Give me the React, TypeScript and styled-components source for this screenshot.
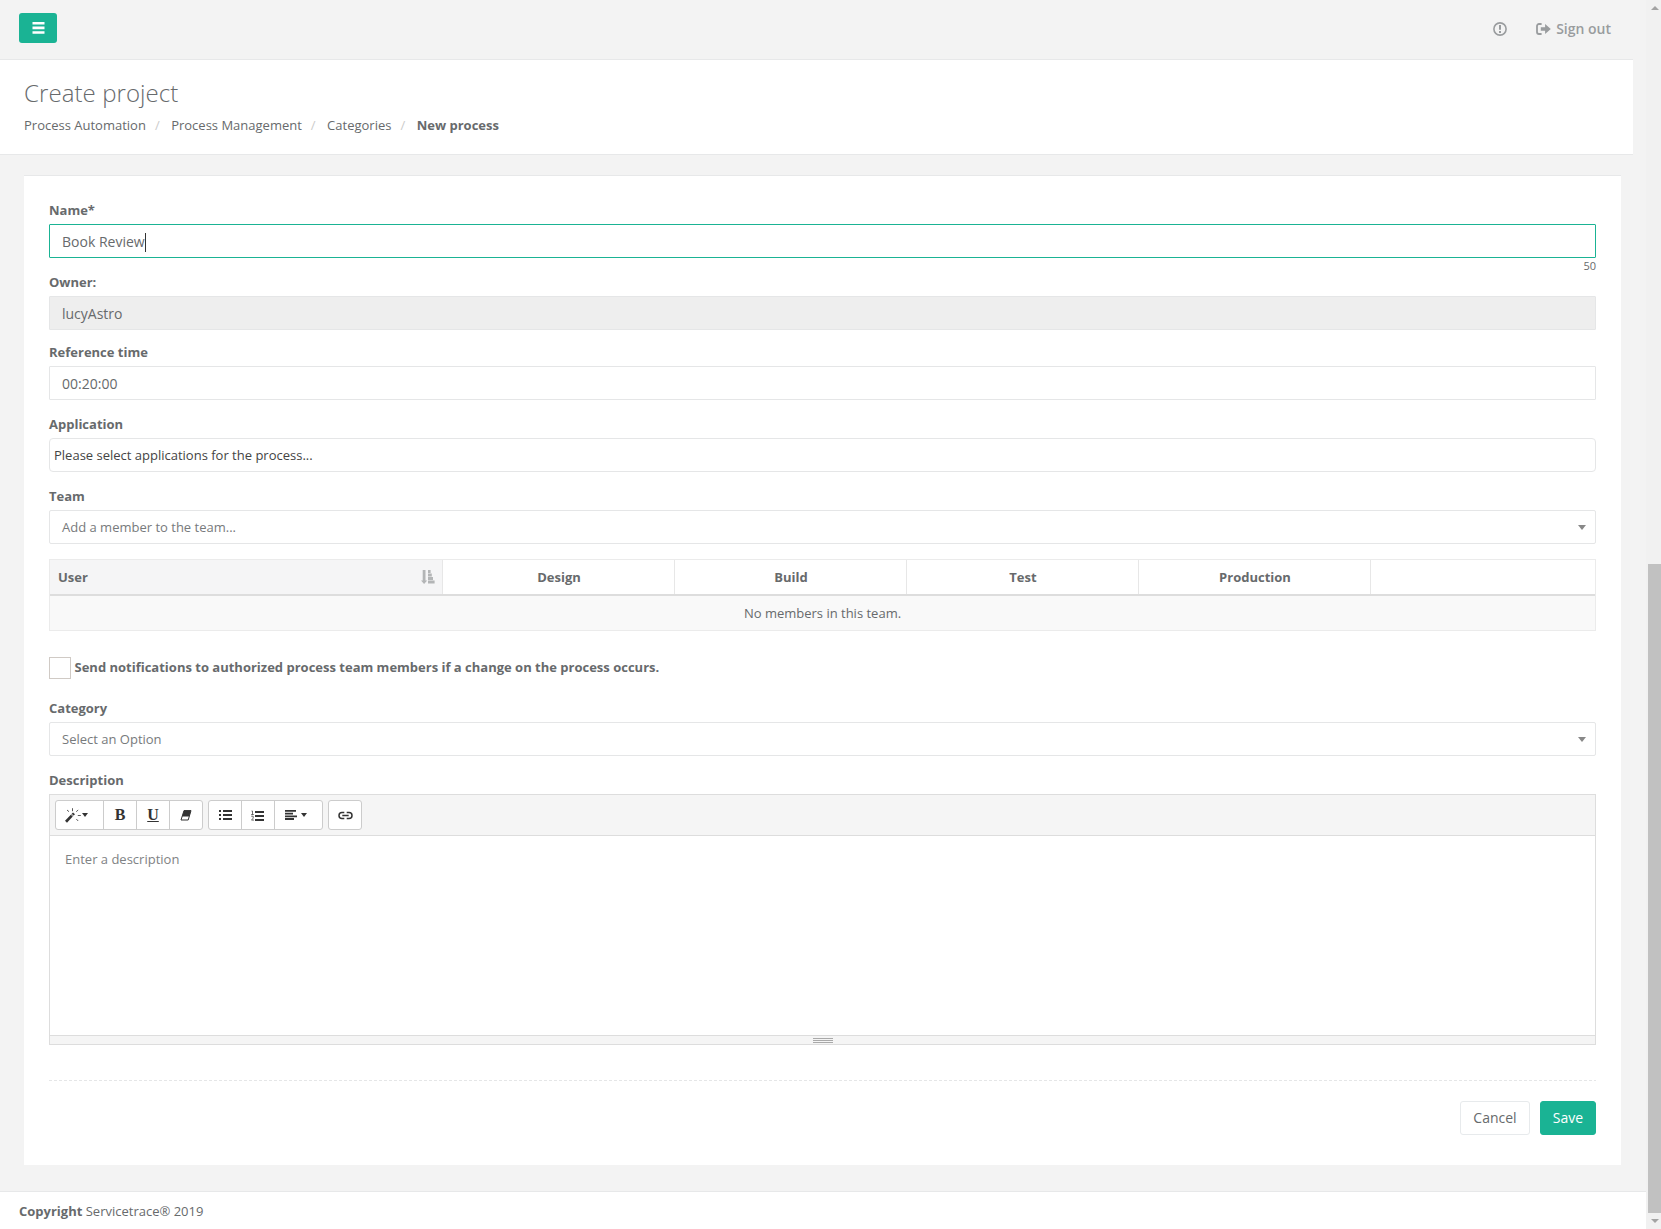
import React from "react";
import styled, { createGlobalStyle, css } from "styled-components";

const Global = createGlobalStyle`
  *, *::before, *::after { box-sizing: border-box; }
  html, body, #root { margin: 0; height: 100%; overflow: hidden; }
  body {
    background: #f3f3f3;
    color: #676a6c;
    font: 13px/18px "Open Sans", sans-serif;
  }
  svg { display: block; }
`;

const Window = styled.div`
  display: flex;
  height: 1229px;
  width: 1661px;
`;
const Page = styled.div`
  flex: 1;
  display: flex;
  flex-direction: column;
`;
const TopBar = styled.nav`
  height: 60px;
  width: 1633px;
  border-bottom: 1px solid #e7e8e9;
  display: flex;
  align-items: flex-start;
  justify-content: space-between;
  padding: 13px 22px 0 19px;
`;
const MenuButton = styled.button`
  width: 38px;
  height: 30px;
  border: 0;
  border-radius: 3px;
  background: #1ab394;
  color: #fff;
  padding: 0;
  display: flex;
  align-items: center;
  justify-content: center;
`;
const TopLinks = styled.div`
  display: flex;
  align-items: center;
  gap: 29px;
  height: 32px;
  color: #999c9e;
  font-size: 14px;
  font-weight: 600;
`;
const SignOut = styled.a`
  display: flex;
  align-items: center;
  gap: 5px;
`;
const Heading = styled.header`
  height: 95px;
  width: 1633px;
  background: #fff;
  border-bottom: 1px solid #e7e8e9;
  padding: 20px 24px 0;
`;
const Title = styled.h2`
  margin: 0 0 10px;
  font-size: 24px;
  line-height: 26px;
  font-weight: 300;
  letter-spacing: 0.08px;
`;
const Crumbs = styled.ol`
  display: flex;
  list-style: none;
  margin: 0;
  padding: 0;
`;
const Crumb = styled.li<{ $active?: boolean }>`
  font-weight: ${(p) => (p.$active ? 700 : 400)};
  &:not(:first-child)::before {
    content: "/";
    color: #ccc;
    font-weight: 400;
    padding: 0 11.5px 0 9px;
  }
`;
const Card = styled.main`
  margin: 20px 25px 0 24px;
  height: 990px;
  border-top: 1px solid #e7e8e9;
  background: #fff;
  padding: 25px 25px 0;
`;
const Field = styled.div<{ $gap: number }>`
  margin-bottom: ${(p) => p.$gap}px;
`;
const Label = styled.label`
  display: block;
  font-weight: 700;
  margin-bottom: 5px;
`;
const box = css`
  display: flex;
  align-items: center;
  height: 34px;
  border: 1px solid #e5e6e7;
  padding: 0 12px;
`;
const Input = styled.div<{ $focus?: boolean; $disabled?: boolean }>`
  ${box}
  padding-top: 2px;
  font-size: 14px;
  border-radius: 1px;
  ${(p) => p.$focus && "border-color: #1ab394;"}
  ${(p) => p.$disabled && "background: #eee;"}
`;
const Caret = styled.i`
  width: 1px;
  height: 19px;
  background: #333;
`;
const MultiSelect = styled.div`
  ${box}
  padding: 0 4px;
  border-radius: 4px;
  color: #444;
`;
const Select = styled.div`
  ${box}
  justify-content: space-between;
  border-radius: 2px;
  padding-right: 9px;
  color: #777a7c;
`;
const Arrow = styled.i<{ $c?: string; $up?: boolean; $w?: number; $h?: number }>`
  border: ${(p) => p.$w ?? 3.5}px solid transparent;
  border-bottom-width: ${(p) => (p.$up ? p.$h ?? 6 : 0)}px;
  border-top-width: ${(p) => (p.$up ? 0 : p.$h ?? 6)}px;
  ${(p) => (p.$up ? "border-bottom-color" : "border-top-color")}: ${(p) => p.$c ?? "#888"};
`;
const SelectArrow = styled(Arrow)`
  border-width: 5px 4px 0;
  margin-top: 1px;
`;
const Counter = styled.div`
  text-align: right;
  font-size: 11px;
  line-height: 15px;
`;
const Table = styled.div`
  border: 1px solid #ebebeb;
  height: 72px;
  margin-bottom: 26px;
`;
const HeadRow = styled.div`
  display: grid;
  grid-template-columns: 393px repeat(4, 232px) 1fr;
  height: 36px;
  border-bottom: 2px solid #ddd;
`;
const HeadCell = styled.div<{ $sorted?: boolean }>`
  display: flex;
  align-items: center;
  justify-content: ${(p) => (p.$sorted ? "space-between" : "center")};
  background: ${(p) => (p.$sorted ? "#f5f5f6" : "#fff")};
  padding: 0 7px 0 8px;
  font-weight: 700;
  &:not(:last-child) { border-right: 1px solid #e7e7e7; }
`;
const EmptyRow = styled.div`
  height: 34px;
  background: #f9f9f9;
  display: flex;
  align-items: center;
  justify-content: center;
`;
const CheckLine = styled.div`
  display: flex;
  gap: 3.5px;
  height: 22px;
  line-height: 20px;
  font-weight: 700;
  margin-bottom: 20px;
`;
const CheckBox = styled.i`
  width: 22px;
  height: 22px;
  border: 1px solid #d0cac5;
`;
const Editor = styled.div`
  height: 251px;
  border: 1px solid #ddd;
  display: flex;
  flex-direction: column;
`;
const Toolbar = styled.div`
  height: 41px;
  flex: none;
  background: #f5f5f5;
  border-bottom: 1px solid #ddd;
  display: flex;
  gap: 5px;
  padding: 5px;
`;
const Group = styled.div`
  display: flex;
  height: 30px;
  border: 1px solid #ccc;
  border-radius: 3px;
  background: #fff;
`;
const Tool = styled.button<{ $menu?: boolean; $gap?: number; $u?: boolean }>`
  width: ${(p) => (p.$menu ? 48 : 33)}px;
  border: 0;
  padding: 0 ${(p) => (p.$menu ? 6 : 0)}px 0 0;
  background: none;
  color: #333;
  display: flex;
  align-items: center;
  justify-content: center;
  gap: ${(p) => p.$gap ?? 0}px;
  font: 700 16px/16px "Liberation Serif", serif;
  ${(p) => p.$u && "text-decoration: underline;"}
  &:not(:last-child) { border-right: 1px solid #ccc; }
  &:last-child { width: ${(p) => (p.$menu ? 47 : 32)}px; }
`;
const EditArea = styled.div`
  flex: 1;
  padding: 14px 15px;
  color: #808284;
`;
const StatusBar = styled.div`
  height: 9px;
  border-top: 1px solid #ddd;
  background: #f5f5f5;
  display: flex;
  justify-content: center;
  padding-top: 2px;
`;
const Grip = styled.i`
  width: 20px;
  height: 5px;
  border: solid #a9a9a9;
  border-width: 1px 0;
  background: linear-gradient(#f5f5f5 0 1px, #a9a9a9 1px 2px, #f5f5f5 2px);
`;
const Divider = styled.div`
  height: 1px;
  margin: 35px 0 20px;
  background: repeating-linear-gradient(90deg, #e5e6e7 0 3px, transparent 3px 5px);
`;
const Actions = styled.div`
  display: flex;
  justify-content: flex-end;
  gap: 10px;
`;
const Button = styled.button<{ $primary?: boolean }>`
  height: 34px;
  width: ${(p) => (p.$primary ? 56 : 70)}px;
  padding: 0;
  border-radius: 3px;
  font: 14px/20px "Open Sans", sans-serif;
  border: 1px solid ${(p) => (p.$primary ? "#1ab394" : "#e7eaec")};
  background: ${(p) => (p.$primary ? "#1ab394" : "#fff")};
  color: ${(p) => (p.$primary ? "#fff" : "#676a6c")};
`;
const Footer = styled.footer`
  margin-top: 26px;
  height: 38px;
  border-top: 1px solid #e7e8e9;
  background: #fff;
  padding: 10px 19px;
`;
const Scrollbar = styled.aside`
  width: 15px;
  background: #f1f1f1;
  display: flex;
  flex-direction: column;
  align-items: center;
  padding: 6px 0 6px 2px;
`;
const Thumb = styled.i`
  width: 13px;
  height: 649px;
  margin: 554px 0 6px;
  background: #c1c1c1;
`;

const Bars = () => (
  <svg width="13" height="12" fill="currentColor">
    <path d="M.5 0h12v2.6H.5zM.5 4.6h12v2.6H.5zM.5 9.2h12v2.6H.5z" />
  </svg>
);
const Alert = () => (
  <svg width="14" height="14" viewBox="0 0 14 14" fill="none" stroke="currentColor">
    <circle cx="7" cy="7" r="6.1" strokeWidth="1.6" />
    <path d="M7 3v4.8M7 9v2" strokeWidth="2" />
  </svg>
);
const Exit = () => (
  <svg width="15" height="12" viewBox="0 0 15 12">
    <path d="M5.6 1H3a2 2 0 0 0-2 2v6a2 2 0 0 0 2 2h2.6" fill="none" stroke="currentColor" strokeWidth="1.8" />
    <path d="M4.8 4.3h4.3V1L14.8 6 9.1 11V7.7H4.8z" fill="currentColor" />
  </svg>
);
const Sort = () => (
  <svg width="14" height="14" viewBox="0 0 14 14" fill="#b3b5b6">
    <path d="M1.7 0h2.8v10.4h1.7L3.1 14 0 10.4h1.7zM7 0h2.6v2.9H7zM7 3.5h3.8v2.9H7zM7 7h5v2.9H7zM7 10.5h6.6v2.9H7z" />
  </svg>
);
const Magic = () => (
  <svg width="16" height="15" viewBox="0 0 16 15" stroke="currentColor" fill="none">
    <path d="M1 13.7 6.8 7.6" strokeWidth="2.7" />
    <path d="M7.2 7.2 9 5.4" strokeWidth="2.7" />
    <path d="m7 6.2 2 2" stroke="#fff" strokeWidth=".7" />
    <path d="M7.5.2v3M2 2l2 1.7M13.2 2l-2 1.7M12.8 7.5h3M11.3 11l1.9 2" strokeWidth=".8" />
  </svg>
);
const Eraser = () => (
  <svg width="12" height="11" viewBox="0 0 12 11">
    <path d="M4 .6h7L8.2 10H1z" fill="none" stroke="currentColor" />
    <path d="M4 .6h7L9.3 6.5H2.1z" fill="currentColor" />
  </svg>
);
const Bullets = () => (
  <svg width="13" height="10" fill="currentColor">
    <path d="M0 0h2v2H0zM0 4h2v2H0zM0 8h2v2H0zM4 0h9v2H4zM4 4h9v2H4zM4 8h9v2H4z" />
  </svg>
);
const Numbers = () => (
  <svg width="14" height="11" viewBox="0 0 14 11">
    <path d="M4 1h9v2H4zM4 5h9v2H4zM4 9h9v2H4z" fill="currentColor" />
    <path d="M.5 1h1v3.5M.2 4.5h2.6M.2 6.2h2v1.9l-1.7 2H3" fill="none" stroke="currentColor" strokeWidth=".7" />
  </svg>
);
const Align = () => (
  <svg width="12" height="10" fill="currentColor">
    <path d="M0 0h11v1.8H0zM0 2.7h8v1.8H0zM0 5.4h12v1.8H0zM0 8.1h9v1.8H0z" />
  </svg>
);
const Chain = () => (
  <svg width="15" height="9" viewBox="0 0 15 9" fill="none" stroke="currentColor" strokeWidth="1.5">
    <path d="M6.3 7.5H4a3 3 0 0 1 0-6h2.3M8.7 1.5H11a3 3 0 0 1 0 6H8.7M4.3 4.5h6.4" />
  </svg>
);

const stages = ["Design", "Build", "Test", "Production"];

export default function App() {
  return (
    <Window>
      <Global />
      <Page>
        <TopBar>
          <MenuButton><Bars /></MenuButton>
          <TopLinks><Alert /><SignOut><Exit />Sign out</SignOut></TopLinks>
        </TopBar>
        <Heading>
          <Title>Create project</Title>
          <Crumbs>
            <Crumb>Process Automation</Crumb>
            <Crumb>Process Management</Crumb>
            <Crumb>Categories</Crumb>
            <Crumb $active>New process</Crumb>
          </Crumbs>
        </Heading>
        <Card>
          <Field $gap={0}>
            <Label>Name*</Label>
            <Input $focus>Book Review<Caret /></Input>
            <Counter>50</Counter>
          </Field>
          <Field $gap={13}>
            <Label>Owner:</Label>
            <Input $disabled>lucyAstro</Input>
          </Field>
          <Field $gap={15}>
            <Label>Reference time</Label>
            <Input>00:20:00</Input>
          </Field>
          <Field $gap={15}>
            <Label>Application</Label>
            <MultiSelect>Please select applications for the process...</MultiSelect>
          </Field>
          <Field $gap={15}>
            <Label>Team</Label>
            <Select>Add a member to the team...<SelectArrow /></Select>
          </Field>
          <Table>
            <HeadRow>
              <HeadCell $sorted>User<Sort /></HeadCell>
              {stages.map((s) => <HeadCell key={s}>{s}</HeadCell>)}
              <HeadCell />
            </HeadRow>
            <EmptyRow>No members in this team.</EmptyRow>
          </Table>
          <CheckLine><CheckBox />Send notifications to authorized process team members if a change on the process occurs.</CheckLine>
          <Field $gap={15}>
            <Label>Category</Label>
            <Select>Select an Option<SelectArrow /></Select>
          </Field>
          <Field $gap={0}>
            <Label>Description</Label>
            <Editor>
              <Toolbar>
                <Group>
                  <Tool $menu $gap={1}><Magic /><Arrow $c="#333" $w={3} $h={4} /></Tool>
                  <Tool>B</Tool>
                  <Tool $u>U</Tool>
                  <Tool><Eraser /></Tool>
                </Group>
                <Group>
                  <Tool><Bullets /></Tool>
                  <Tool><Numbers /></Tool>
                  <Tool $menu $gap={4}><Align /><Arrow $c="#333" $w={3} $h={4} /></Tool>
                </Group>
                <Group><Tool><Chain /></Tool></Group>
              </Toolbar>
              <EditArea>Enter a description</EditArea>
              <StatusBar><Grip /></StatusBar>
            </Editor>
          </Field>
          <Divider />
          <Actions>
            <Button>Cancel</Button>
            <Button $primary>Save</Button>
          </Actions>
        </Card>
        <Footer><b>Copyright</b> Servicetrace® 2019</Footer>
      </Page>
      <Scrollbar>
        <Arrow $up $c="#a3a3a3" $w={4} $h={4} />
        <Thumb />
        <Arrow $c="#a3a3a3" $w={4} $h={4} />
      </Scrollbar>
    </Window>
  );
}
